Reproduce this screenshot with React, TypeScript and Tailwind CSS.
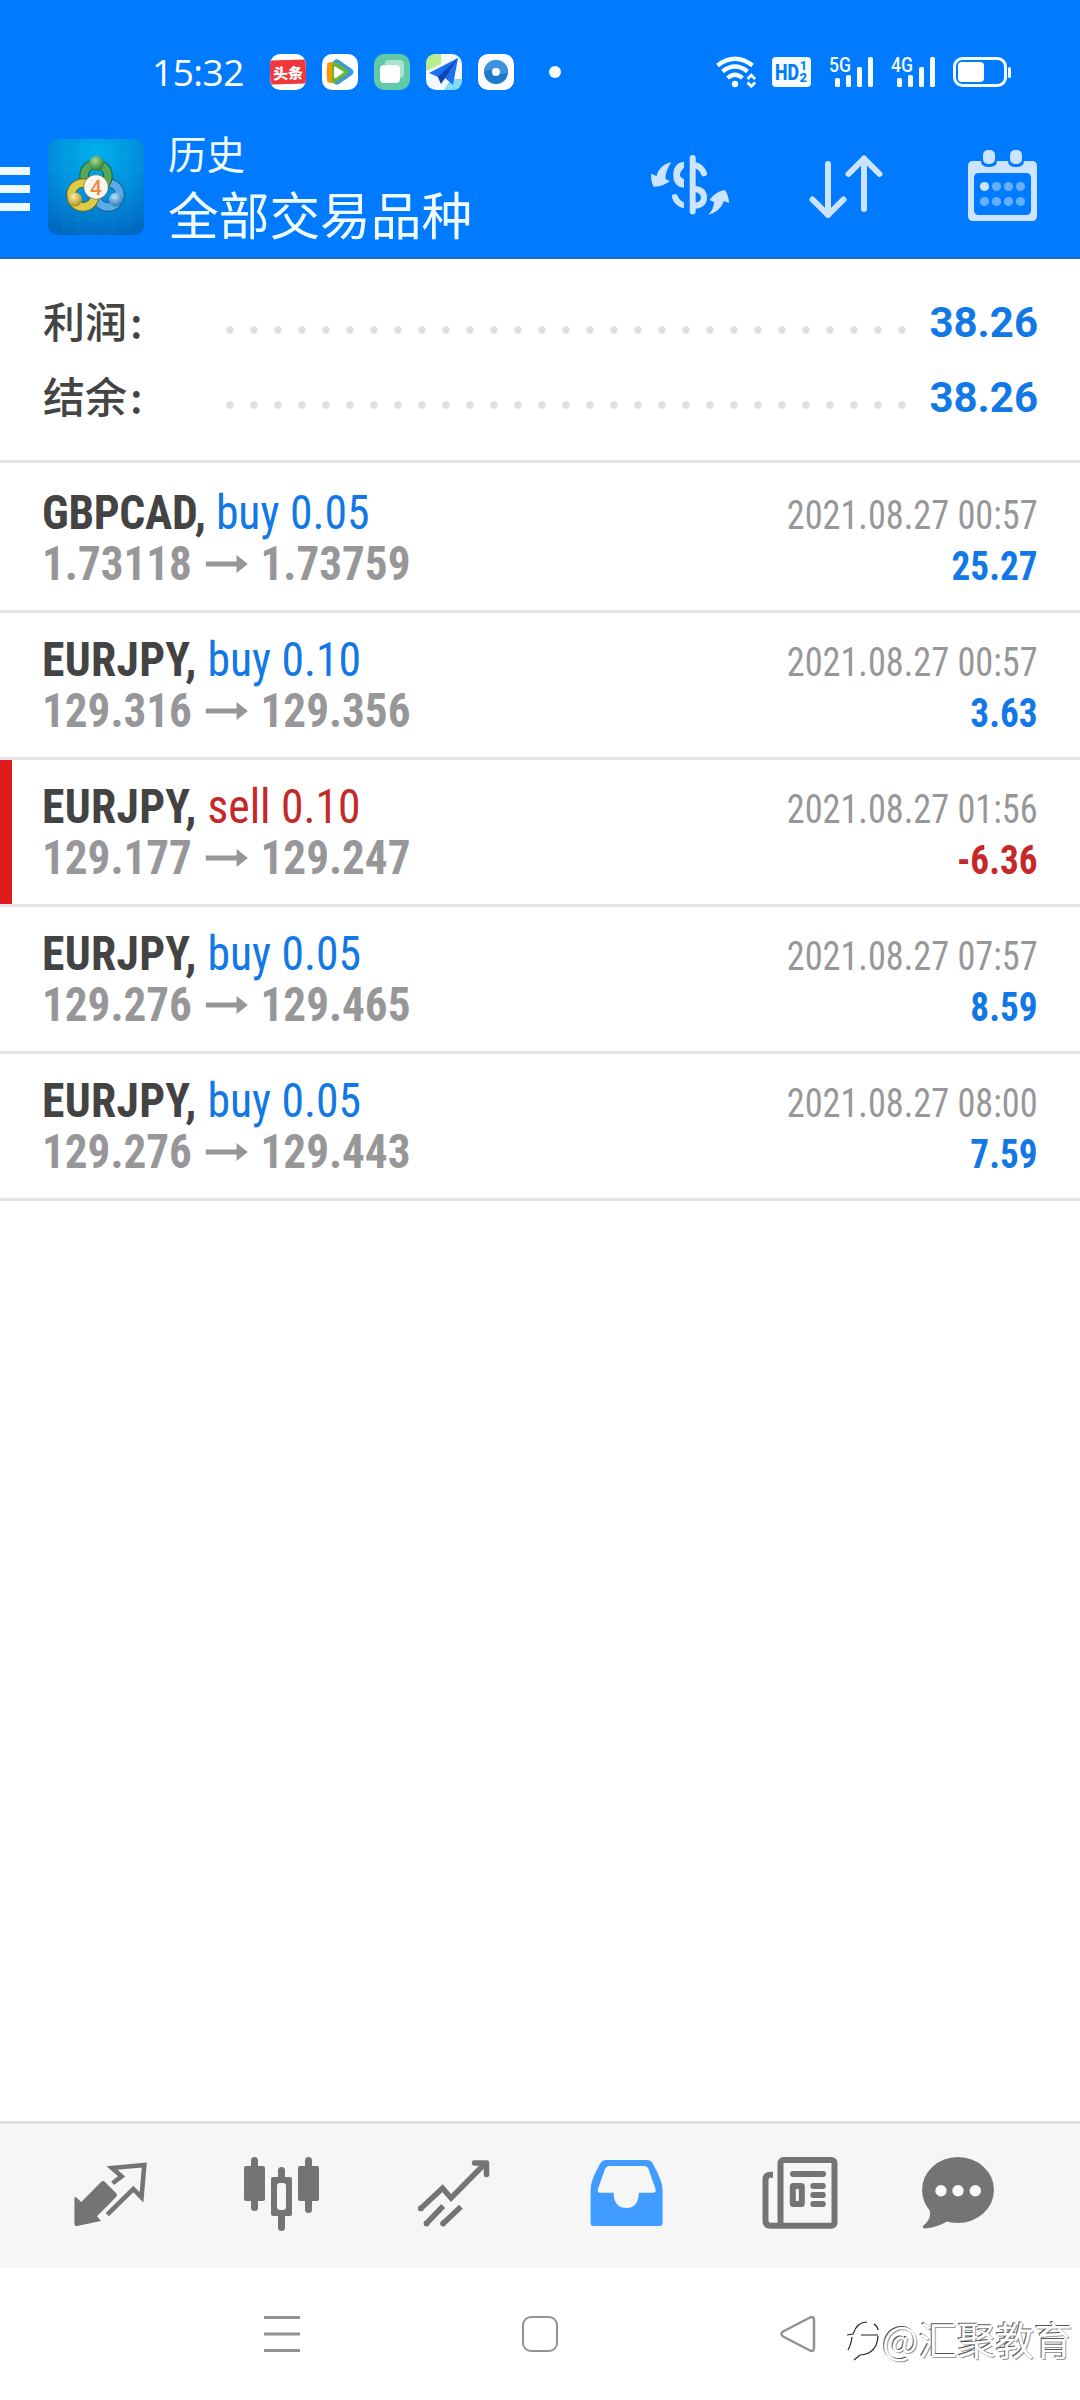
import React from "react";

interface Deal {
  id: number;
  symbol: string;
  side: "buy" | "sell";
  volume: string;
  open: string;
  close: string;
  time: string;
  profit: string;
}

const deals: Deal[] = [
  { id: 1, symbol: "GBPCAD", side: "buy", volume: "0.05", open: "1.73118", close: "1.73759", time: "2021.08.27 00:57", profit: "25.27" },
  { id: 2, symbol: "EURJPY", side: "buy", volume: "0.10", open: "129.316", close: "129.356", time: "2021.08.27 00:57", profit: "3.63" },
  { id: 3, symbol: "EURJPY", side: "sell", volume: "0.10", open: "129.177", close: "129.247", time: "2021.08.27 01:56", profit: "-6.36" },
  { id: 4, symbol: "EURJPY", side: "buy", volume: "0.05", open: "129.276", close: "129.465", time: "2021.08.27 07:57", profit: "8.59" },
  { id: 5, symbol: "EURJPY", side: "buy", volume: "0.05", open: "129.276", close: "129.443", time: "2021.08.27 08:00", profit: "7.59" },
];

const symbolTracking: Record<string, string> = {
  GBPCAD: "tracking-[-0.3px]",
  EURJPY: "tracking-[0.3px]",
};

const summary = [
  { label: "利润", value: "38.26" },
  { label: "结余", value: "38.26" },
];

const AppBadges = () => (
  <div className="flex gap-4">
    <div className="flex h-9 w-9 items-center overflow-hidden rounded-[10px] bg-white">
      <div className="flex h-[24px] w-9 -rotate-2 items-center justify-center bg-[#f0383c] text-[15px] leading-none font-black text-white">
        头条
      </div>
    </div>
    <svg className="h-9 w-9" viewBox="0 0 36 36">
      <rect width="36" height="36" rx="10" fill="#fff" />
      <path d="M5 11q0-3 4-3h4v21H9q-4 0-4-3-1-8 0-15z" fill="#f59a0c" />
      <path d="M11 8q2-4 6-2l13 9q3 3 0 6l-13 9q-4 2-6-2z" fill="#3a9ade" />
      <path d="M10 10q3-3 6-1l9 7q2 2 0 4l-12 9q-3 0-3-3z" fill="#6cb52c" />
      <path d="M12 13q1-1 2 0l8 5-8 6q-2 1-2-1z" fill="#fff" />
    </svg>
    <svg className="h-9 w-9" viewBox="0 0 36 36">
      <rect width="36" height="36" rx="10" fill="#5fc9a8" />
      <rect x="11" y="6" width="19" height="18" rx="4" fill="#a9e3d0" />
      <rect x="6" y="11" width="20" height="18" rx="4" fill="#fff" />
    </svg>
    <svg className="h-9 w-9" viewBox="0 0 36 36">
      <rect width="36" height="36" rx="10" fill="#f3f8ff" />
      <path d="M10 0h5v10L0 17v-7Q0 0 10 0z" fill="#b8ec8c" />
      <path d="M25 25h11v1q0 10-10 10h-8z" fill="#7fdcf8" />
      <path d="M32 4L3 19l9 4 3 6 4-5 8 7z" fill="#1d6ff0" />
      <path d="M32 4L12 23l3 7z" fill="#0d47b5" />
    </svg>
    <svg className="h-9 w-9" viewBox="0 0 36 36">
      <rect width="36" height="36" rx="10" fill="#fff" />
      <circle cx="18" cy="18" r="12" fill="#1f78cf" />
      <path d="M6 18a12 12 0 0 1 24 0q-6 4-12 0t-12 0z" fill="#3d93e0" />
      <circle cx="18" cy="18" r="4" fill="#fff" />
    </svg>
  </div>
);

const Signal: React.FC<{ label: string }> = ({ label }) => (
  <svg className="-mt-2 h-10 w-[46px]" viewBox="0 -8 46 40" fill="#f4fcff">
    <text x="0" y="15.500" fontSize="19.500" fontWeight="500" textLength="22" lengthAdjust="spacingAndGlyphs" fontFamily="Roboto, sans-serif">
      {label}
    </text>
    <rect x="6" y="22" width="5" height="9" rx="1.500" />
    <rect x="17" y="19" width="5" height="12" rx="1.500" />
    <rect x="28" y="11" width="5" height="20" rx="1.500" />
    <rect x="39" y="1" width="5" height="30" rx="1.500" />
  </svg>
);

const StatusBar = () => (
  <div className="flex h-[108px] items-center pt-9 pl-[152px] text-white">
    <span className="-mt-[2px] w-[118px] font-[Open_Sans] text-[37px] leading-none tracking-[-0.5px]">15:32</span>
    <AppBadges />
    <div className="ml-[35px] h-3 w-3 rounded-full bg-white" />
    <svg className="ml-[155px] h-[32px] w-[42px]" viewBox="0 0 42 32" fill="none" stroke="#f4fcff" strokeWidth="4.200">
      <path d="M1.500 9.500Q19 -4 36.500 9.500M6.500 15.500Q19 5.500 31.500 15.500M11.500 22Q19 15.500 26.500 22" />
      <circle cx="19" cy="28" r="3.200" fill="#f4fcff" stroke="none" />
      <path d="M31.500 23l3.800-3.800 3.800 3.800M31.500 26.500l3.800 3.800 3.800-3.800" strokeWidth="2.800" />
    </svg>
    <svg className="ml-[14px] h-[32px] w-[40px]" viewBox="0 0 40 32" fontFamily="Roboto, sans-serif" fontWeight="800" fill="#007aff">
      <rect x="0" y="1" width="39" height="30" rx="4" fill="#f4fcff" />
      <text x="3" y="24" fontSize="22" textLength="24" lengthAdjust="spacingAndGlyphs">HD</text>
      <text x="28" y="14" fontSize="12">1</text>
      <text x="27.500" y="26" fontSize="13">2</text>
    </svg>
    <div className="ml-[17px] flex gap-4">
      <Signal label="5G" />
      <Signal label="4G" />
    </div>
    <svg className="ml-4 h-[32px] w-[60px]" viewBox="0 0 60 32">
      <rect x="1.500" y="2.500" width="51" height="27" rx="8" fill="none" stroke="#f4fcff" strokeWidth="3" />
      <rect x="5" y="6" width="26" height="20" rx="4" fill="#fff" />
      <rect x="55" y="11" width="3" height="11" rx="1.500" fill="#f4fcff" />
    </svg>
  </div>
);

const AppLogo = () => (
  <svg className="h-24 w-24" viewBox="0 0 96 96">
    <defs>
      <radialGradient id="logoBg" cx="0.5" cy="0.15" r="0.9">
        <stop offset="0" stopColor="#00b0ee" />
        <stop offset="0.5" stopColor="#0090dc" />
        <stop offset="1" stopColor="#0068c0" />
      </radialGradient>
      <radialGradient id="greenBall" cx="0.4" cy="0.3" r="0.7">
        <stop offset="0" stopColor="#a5d98f" />
        <stop offset="1" stopColor="#2c7c38" />
      </radialGradient>
      <radialGradient id="yellowBall" cx="0.4" cy="0.3" r="0.7">
        <stop offset="0" stopColor="#fbf2a8" />
        <stop offset="1" stopColor="#b08c1c" />
      </radialGradient>
      <radialGradient id="blueBall" cx="0.4" cy="0.3" r="0.7">
        <stop offset="0" stopColor="#b8e2fa" />
        <stop offset="1" stopColor="#2a78bc" />
      </radialGradient>
    </defs>
    <rect width="96" height="96" rx="9" fill="url(#logoBg)" />
    <path
      d="M16 0v96M32 0v96M48 0v96M64 0v96M80 0v96M0 16h96M0 32h96M0 48h96M0 64h96M0 80h96"
      stroke="#4cc8e8"
      strokeOpacity="0.12"
    />
    <g fill="none">
      <circle cx="60" cy="56" r="12" stroke="#1d568c" strokeWidth="9.500" />
      <circle cx="60" cy="56" r="12" stroke="#5aaae4" strokeWidth="7.500" />
      <circle cx="48" cy="37" r="12" stroke="#1f5c2c" strokeWidth="9.500" />
      <circle cx="48" cy="37" r="12" stroke="#55a95a" strokeWidth="7.500" />
      <circle cx="35" cy="56" r="12" stroke="#6d6420" strokeWidth="9.500" />
      <circle cx="35" cy="56" r="12" stroke="#dccb48" strokeWidth="7.500" />
    </g>
    <circle cx="48.500" cy="24.500" r="7.500" fill="url(#greenBall)" />
    <circle cx="27" cy="60.500" r="7" fill="url(#yellowBall)" />
    <circle cx="68" cy="60.500" r="7" fill="url(#blueBall)" />
    <circle cx="48" cy="48" r="12.500" fill="#8a7a58" />
    <circle cx="48" cy="48" r="11.800" fill="#f9f6f2" />
    <text x="48" y="55.500" textAnchor="middle" fontSize="21" fontWeight="500" fill="#f28a3c" fontFamily="Roboto, sans-serif">
      4
    </text>
  </svg>
);

const CurrencyIcon = () => (
  <svg className="h-[72px] w-20" viewBox="0 0 80 72" fill="#cce4ff">
    <g fill="none" stroke="#cce4ff" strokeWidth="6" strokeLinecap="round">
      <path d="M42.700 8v53.500" />
      <path d="M43 14.800q8 1 11 8.500M43 38.500q11 1 11 9t-11 8.500" />
    </g>
    <path d="M34 11.700Q23.300 13 23.300 25T34 37.700V29q-4-1.500-4-4.500t4-6.500z" />
    <path d="M21.700 46.500q.300-2.500 3-2.500 2.500 0 3.500 3 1.800 4 5.800 5.300v6q-10-2-12.300-11.800z" />
    <path d="M21.300 12Q9 15 6.500 26L1 23.700Q1 32 3.500 36.700 13 37 19.800 31L15.500 29Q15 22 21.300 12z" />
    <path d="M58.300 64.700Q64 59 64 52l-4.500-2Q66 41 75 40q4 6 4 13l-5-2q-4 11-15.700 13.700z" />
  </svg>
);

const SortIcon = () => (
  <svg className="h-[72px] w-20" viewBox="0 0 80 72" fill="none" stroke="#cce4ff" strokeWidth="6" strokeLinecap="round" strokeLinejoin="round">
    <path d="M22 14v51M6.500 49.500L22 65l15.500-15.500M58 59V8.500M42.500 24L58 8.500 73.500 24" />
  </svg>
);

const CalendarIcon = () => (
  <svg className="h-[72px] w-[70px]" viewBox="0 0 70 72">
    <path
      fillRule="evenodd"
      fill="#cce4ff"
      d="M5 11h8q0 6 8 6t8-6h11q0 6 8 6t8-6h8q5 0 5 5v50q0 5-5 5H5q-5 0-5-5V16q0-5 5-5zM11 23q-5 0-5 5v32q0 5 5 5h47q5 0 5-5V28q0-5-5-5z"
    />
    <rect x="15" y="0" width="12" height="14" rx="5" fill="#cce4ff" />
    <rect x="42" y="0" width="12" height="14" rx="5" fill="#cce4ff" />
    {[16.5, 28.5, 40.5, 52.5].map((x) => (
      <g key={x} fill="#66afff">
        <circle cx={x} cy="36.500" r="4.600" fill={x < 20 ? "#cce4ff" : "#66afff"} />
        <circle cx={x} cy="51.500" r="4.600" />
      </g>
    ))}
  </svg>
);

const Header = () => (
  <header className="h-[259px] border-b-2 border-[#1a6cc0] bg-[#007aff]">
    <StatusBar />
    <div className="flex h-[149px] pt-[31px]">
      <div className="mt-7 flex w-12 flex-col gap-[10px]">
        <div className="h-2 w-[30px] bg-[#eef9ff]" />
        <div className="h-2 w-[30px] bg-[#eef9ff]" />
        <div className="h-2 w-[30px] bg-[#eef9ff]" />
      </div>
      <AppLogo />
      <div className="-mt-[7px] ml-6 flex-1 whitespace-nowrap text-[#f0fbff]">
        <div className="text-[38.500px] leading-[40px]">历史</div>
        <div className="mt-[13px] text-[50.700px] leading-[56px]">全部交易品种</div>
      </div>
      <div className="mt-[11px] mr-[42px] flex">
        <CurrencyIcon />
        <div className="ml-[76px]">
          <SortIcon />
        </div>
        <div className="ml-[82px]">
          <CalendarIcon />
        </div>
      </div>
    </div>
  </header>
);

const Summary = () => (
  <div className="h-[204px] border-b-[3px] border-[#e4e4e4] pt-[24px] pr-[42px] pl-[43px]">
    {summary.map((item) => (
      <div key={item.label} className="flex h-[75px] items-center">
        <span className="-mt-[2px] w-[183px] text-[42px] leading-none font-medium text-[#444]">
          {item.label}
          <span className="ml-[3px]">:</span>
        </span>
        <svg className="mt-[18px] h-2 w-[680px]" viewBox="0 0 680 8" fill="#e0e0e0">
          {Array.from({ length: 29 }, (_, i) => (
            <circle key={i} cx={4 + i * 24} cy="4" r="3.700" />
          ))}
        </svg>
        <span className="mt-[5px] ml-auto font-[Roboto] text-[42px] leading-none font-bold text-[#1278e6]">{item.value}</span>
      </div>
    ))}
  </div>
);

const DealRow: React.FC<{ deal: Deal }> = ({ deal }) => {
  const isSell = deal.side === "sell";

  return (
    <div className="flex h-[147px] border-b-[3px] border-[#e4e4e4] pr-[42px] font-[Roboto] font-stretch-condensed whitespace-nowrap">
      <div className={`mr-[30px] w-3 ${isSell ? "bg-[#e11b1b]" : ""}`} />
      <div className="pt-[21px] text-[48px] leading-[51px]">
        <div className="origin-left scale-x-[0.95]">
          <span className={`font-bold text-[#434343] ${symbolTracking[deal.symbol]}`}>{deal.symbol}, </span>
          <span className={isSell ? "text-[#c62828]" : "text-[#1278e6]"}>
            {deal.side} {deal.volume}
          </span>
        </div>
        <div className="flex origin-left scale-x-[0.94] items-center font-bold text-[#979799]">
          <span>{deal.open}</span>
          <svg className="mr-[14px] ml-[14px] h-5 w-[45px]" viewBox="0 0 45 20" fill="#979799">
            <path d="M0 7.500h33V1l12 9-12 9v-6.500H0z" />
          </svg>
          <span>{deal.close}</span>
        </div>
      </div>
      <div className="ml-auto pt-[24px] text-right text-[40px] leading-[51px]">
        <div className="origin-right scale-x-[0.907] text-[#979799]">{deal.time}</div>
        <div
          className={`origin-right scale-x-[0.93] font-bold ${
            deal.profit.startsWith("-") ? "text-[#c62828]" : "text-[#1278e6]"
          }`}
        >
          {deal.profit}
        </div>
      </div>
    </div>
  );
};

const QuotesIcon = () => (
  <svg className="h-20 w-20" viewBox="0 0 80 80" fill="#747474">
    <path d="M42.600 27.300l9-7L42 12l32.300-3-2.800 32.300-8.200-8.300-26 25.700" fill="none" stroke="#747474" strokeWidth="4.600" />
    <path d="M31 26q2-2 4 0l11 11q2 2 0 4L27 60.300l4 4.700-24 5q-2.600 0-2.600-2.600V41.300h1.600l5.300 4.700z" />
  </svg>
);

const ChartIcon = () => (
  <svg className="h-20 w-20" viewBox="0 0 80 80" fill="#747474">
    <rect x="9" y="1" width="7" height="54" rx="3.500" />
    <rect x="2" y="10" width="21" height="35" rx="2" />
    <rect x="36" y="11" width="7" height="64" rx="3.500" />
    <rect x="29" y="21" width="21" height="39" rx="2" />
    <rect x="35" y="27" width="9" height="27" rx="3" fill="#f6f6f6" />
    <rect x="63" y="1" width="7" height="56" rx="3.500" />
    <rect x="56" y="10" width="21" height="35" rx="2" />
  </svg>
);

const TradeIcon = () => (
  <svg className="h-20 w-20" viewBox="0 0 80 80" fill="none" stroke="#747474" strokeWidth="5.500">
    <path d="M6.500 52.700l22-20.400 8.600 9.700 34-34.500" />
    <path d="M60.500 7h12v11.500" strokeLinecap="round" strokeLinejoin="round" />
    <path d="M12.300 67.700L29.200 50M28.900 67.700l18-17" />
    <g fill="#747474" stroke="none">
      <circle cx="6.800" cy="52.400" r="2.900" />
      <circle cx="12.500" cy="67.500" r="2.900" />
      <circle cx="29.100" cy="67.500" r="2.900" />
    </g>
  </svg>
);

const HistoryIcon = () => (
  <svg className="h-20 w-20" viewBox="0 0 80 80" fill="#409cff">
    <path
      fillRule="evenodd"
      d="M20 4h41q4 0 6 4 9 16 9.600 25v34q0 3-3 3h-66q-3 0-3-3V33Q5 23 14 8q2-4 6-4zM23.500 10q-3 0-4.500 3l-7 20q-1 3.700 2 3.700h13.700v2.600Q29 52 40.200 52t12.500-12.700v-2.600H67q3.500 0 2.500-3.700l-7-20q-1.500-3-4.500-3z"
    />
  </svg>
);

const NewsIcon = () => (
  <svg className="h-20 w-20" viewBox="0 0 80 80" fill="none" stroke="#747474" strokeWidth="6">
    <rect x="22.500" y="4" width="54" height="65.700" rx="3" />
    <path d="M15 18.800h-2.500q-5 0-5 5v41q0 5 5 5H24" />
    <path d="M35 18h30M55.300 30h9.500M55.300 39h9.500M55.300 48h9.500" strokeLinecap="round" />
    <rect x="34.800" y="30" width="9" height="18" rx="0.500" />
  </svg>
);

const ChatIcon = () => (
  <svg className="h-20 w-20" viewBox="0 0 80 80" fill="#747474">
    <ellipse cx="40" cy="34" rx="36" ry="33" />
    <path d="M11 52q4 10-6 18-1 2.500 2 2.500 12-1 23-7.500z" />
    <g fill="#fafafa">
      <circle cx="23" cy="34.700" r="5.700" />
      <circle cx="40" cy="34.700" r="5.700" />
      <circle cx="57.300" cy="34.700" r="5.700" />
    </g>
  </svg>
);

const tabs = [QuotesIcon, ChartIcon, TradeIcon, HistoryIcon, NewsIcon];

const TabBar = () => (
  <nav className="flex h-[147px] items-center border-t-[3px] border-[#dfdfdf] bg-[#f6f6f6] pl-6">
    {tabs.map((Icon, i) => (
      <div key={i} className="flex w-[172px] justify-center">
        <Icon />
      </div>
    ))}
    <div className="flex w-[148px] justify-center">
      <ChatIcon />
    </div>
  </nav>
);

const SystemNav = () => (
  <div className="flex h-[132px] items-start pt-[46px] pl-[264px]">
    <svg className="h-10 w-9" viewBox="0 0 36 40" stroke="#929292" strokeWidth="3">
      <path d="M0 3.500h36M0 20h36M0 36.500h36" />
    </svg>
    <div className="mt-[2px] ml-[222px] h-9 w-9 rounded-[9px] border-[2.500px] border-[#929292]" />
    <svg className="ml-[222px] h-10 w-9" viewBox="0 0 36 40" fill="none" stroke="#929292" strokeWidth="2.500" strokeLinejoin="round">
      <path d="M3 17.500L30 3.500q4-1.500 4 2.500v28q0 4-4 2.500L3 22.500q-3-2.500 0-5z" />
    </svg>
    <div className="-mt-[4px] ml-[31px] flex items-center">
      <svg className="mt-[10px] h-[46px] w-[35px]" viewBox="0 0 35 46" fill="none" stroke="#222" strokeWidth="1.200">
        <path d="M0 15l6-1Q10 2 20 2M1 30q3-5 4-13M14 15h17M27 4q4 3 4 6M31 16q-1 18-18 19l-6 5" />
      </svg>
      <span className="text-[38.500px] leading-[44px] whitespace-nowrap text-white [text-shadow:-1px_-1px_0_#555,1px_1px_0_#999]">
        @汇聚教育
      </span>
    </div>
  </div>
);

const App: React.FC = () => {
  return (
    <div className="flex h-[2400px] w-[1080px] flex-col overflow-hidden bg-white font-['Noto_Sans_CJK_SC',sans-serif]">
      <Header />
      <Summary />
      <main className="flex-1 pt-[3px]">
        {deals.map((deal) => (
          <DealRow key={deal.id} deal={deal} />
        ))}
      </main>
      <TabBar />
      <SystemNav />
    </div>
  );
};

export default App;
